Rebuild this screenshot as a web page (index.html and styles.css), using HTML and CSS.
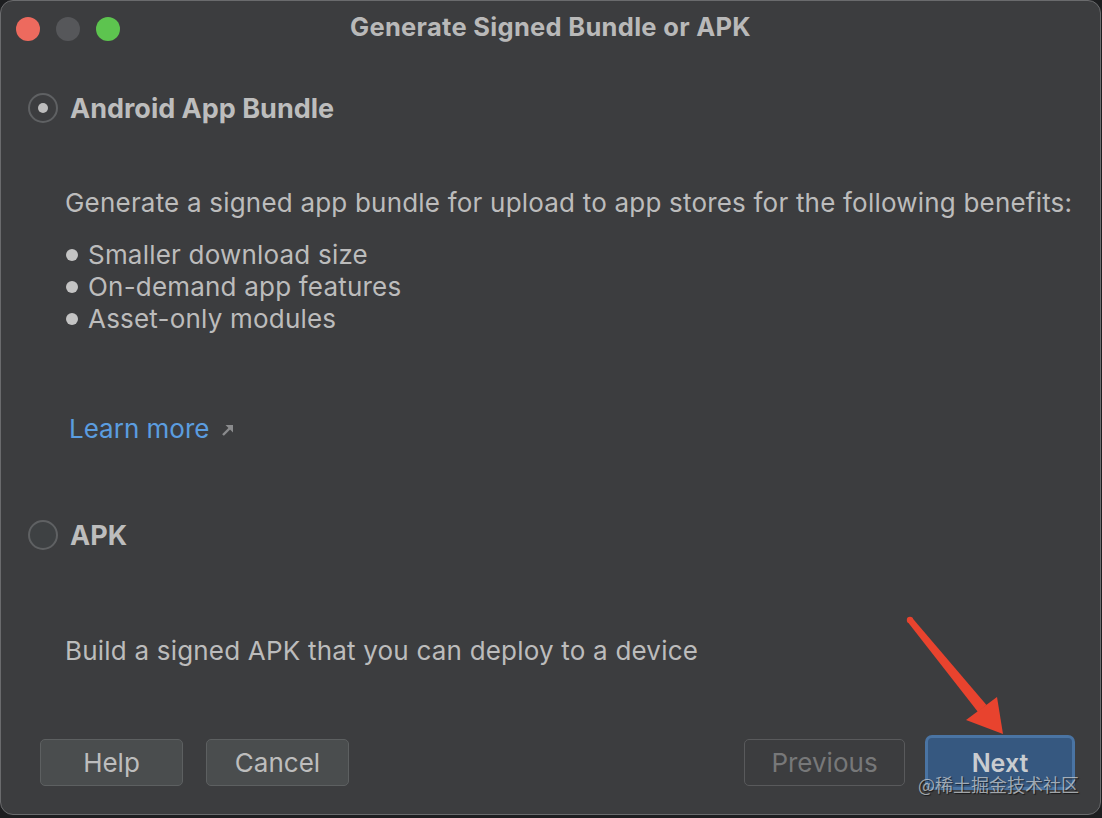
FILE: index.html
```html
<!DOCTYPE html>
<html>
<head>
<meta charset="utf-8">
<link rel="stylesheet" href="styles.css">
</head>
<body>
<div class="window">
  <div class="titlebar">
    <div class="lights">
      <span class="light red"></span>
      <span class="light gray"></span>
      <span class="light green"></span>
    </div>
    <div class="title">Generate Signed Bundle or APK</div>
  </div>
  <div class="content">
    <div class="radio-row first">
      <span class="radio checked"><span class="dot"></span></span>
      <span class="radio-label">Android App Bundle</span>
    </div>
    <p class="desc bundle-desc">Generate a signed app bundle for upload to app stores for the following benefits:</p>
    <ul class="benefits">
      <li>Smaller download size</li>
      <li>On-demand app features</li>
      <li>Asset-only modules</li>
    </ul>
    <a class="learn">Learn more <svg class="ext" width="14" height="14" viewBox="0 0 14 14"><path d="M2 12 L10 4" stroke="#8a8b8d" stroke-width="2.4" fill="none"/><path d="M4.5 2 H12 V9.5 Z" fill="#8a8b8d"/></svg></a>
    <div class="radio-row apk">
      <span class="radio"></span>
      <span class="radio-label">APK</span>
    </div>
    <p class="desc apk-desc">Build a signed APK that you can deploy to a device</p>
  </div>
  <div class="buttons">
    <div class="left">
      <button class="btn">Help</button>
      <button class="btn">Cancel</button>
    </div>
    <div class="right">
      <button class="btn disabled">Previous</button>
      <button class="btn primary">Next</button>
    </div>
  </div>
  <svg class="arrow" width="1102" height="818" viewBox="0 0 1102 818">
    <circle cx="910" cy="620" r="3.2" fill="#e8432e"/>
    <polygon points="907.5,621.8 912.5,618.2 986.5,705 978,712" fill="#e8432e"/>
    <polygon points="966,720 997,697 1003,734" fill="#e8432e"/>
  </svg>
  <div class="watermark">@稀土掘金技术社区</div>
</div>
</body>
</html>
```
FILE: styles.css
```css
* { box-sizing: border-box; }
html, body {
  margin: 0;
  padding: 0;
  background: #1d1e20;
  width: 1102px;
  height: 818px;
  overflow: hidden;
}
.window {
  position: relative;
  width: 1101px;
  height: 815px;
  background: #3c3d3f;
  border: 1px solid #6a6b6d;
  border-radius: 13px;
  font-family: Inter, "Noto Sans", sans-serif;
  color: #bcbcbc;
  display: flex;
  flex-direction: column;
}
.titlebar {
  height: 55px;
  display: flex;
  align-items: center;
  position: relative;
}
.lights {
  display: flex;
  gap: 16px;
  padding-left: 15px;
  padding-top: 1px;
}
.light {
  width: 24px;
  height: 24px;
  border-radius: 50%;
  display: block;
}
.red { background: #ed6a5e; }
.gray { background: #56575a; }
.green { background: #5dc44f; }
.title {
  position: absolute;
  left: 0;
  right: 0;
  top: 11px;
  text-align: center;
  font-size: 25.5px;
  letter-spacing: 0.3px;
  font-weight: 700;
  color: #b9b9b9;
  line-height: 30px;
}
.content {
  flex: 1;
  padding-left: 27px;
}
.radio-row {
  display: flex;
  align-items: center;
  height: 32px;
}
.radio-row.first { margin-top: 36px; }
.radio-row.apk { margin-top: 74px; }
.radio {
  width: 30px;
  height: 30px;
  border-radius: 50%;
  border: 2px solid #5f6163;
  background: #3e4143;
  display: flex;
  align-items: center;
  justify-content: center;
}
.radio.checked { background: #3c3d3f; }
.dot {
  width: 10px;
  height: 10px;
  border-radius: 50%;
  background: #bdbdbd;
}
.radio-label {
  margin-left: 12px;
  font-size: 27px;
  font-weight: 700;
  color: #bdbdbd;
}
.desc {
  margin: 0;
  padding-left: 37px;
  font-size: 26px;
  letter-spacing: 0.2px;
  line-height: 32px;
}
.bundle-desc { margin-top: 63px; }
.apk-desc { margin-top: 84px; }
.benefits {
  list-style: none;
  margin: 20px 0 0 0;
  padding-left: 37px;
  font-size: 26px;
  letter-spacing: 0.2px;
  line-height: 32px;
}
.benefits li {
  display: flex;
  align-items: center;
}
.benefits li::before {
  content: "";
  width: 12px;
  height: 12px;
  border-radius: 50%;
  background: #c4c4c4;
  margin-right: 10px;
  margin-left: 1px;
}
.learn {
  display: flex;
  align-items: center;
  margin-top: 78px;
  padding-left: 41px;
  font-size: 26px;
  line-height: 32px;
  color: #5b9de0;
}
.ext { margin-left: 12px; margin-top: 2px; }
.buttons {
  display: flex;
  justify-content: space-between;
  padding: 0 25px 28px 39px;
}
.left, .right {
  display: flex;
  gap: 23px;
}
.right { gap: 20px; }
.btn {
  height: 47px;
  border-radius: 5px;
  border: 1px solid #5d6061;
  background: #4a4d4e;
  color: #bdbdbd;
  font-family: Inter, "Noto Sans", sans-serif;
  font-size: 26px;
  padding: 0;
}
.left .btn:first-child { width: 143px; }
.left .btn:last-child { width: 143px; }
.btn.disabled {
  width: 161px;
  background: #3c3d3f;
  border-color: #595a5c;
  color: #777879;
}
.btn.primary {
  width: 150px;
  height: 55px;
  margin-top: -4px;
  margin-bottom: -4px;
  background: #365880;
  border: 3px solid #4a74a3;
  border-radius: 7px;
  color: #c9ccd0;
  font-weight: 600;
  font-size: 25px;
}
.arrow {
  position: absolute;
  left: -1px;
  top: -1px;
  pointer-events: none;
}
.watermark {
  position: absolute;
  left: 917px;
  top: 771px;
  font-family: "Noto Sans CJK SC", sans-serif;
  font-size: 18px;
  line-height: 24px;
  color: rgba(200, 205, 210, 0.75);
  text-shadow: 1px 1px 1px rgba(0, 0, 0, 0.6);
}
```
